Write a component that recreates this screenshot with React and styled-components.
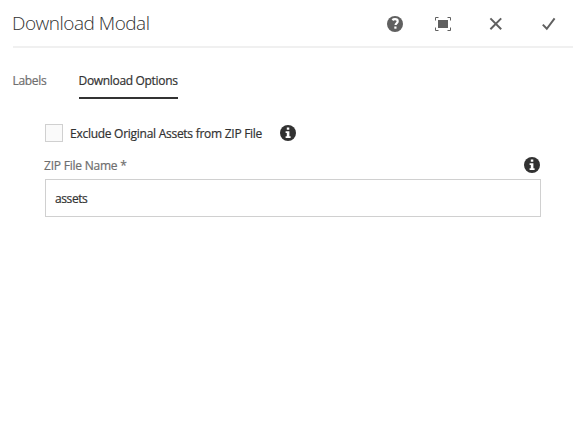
import React from 'react';
import styled, { createGlobalStyle } from 'styled-components';

const GlobalStyle = createGlobalStyle`
  * { box-sizing: border-box; }
  body {
    margin: 0;
    background: #fff;
    color: #323232;
    font-family: "Open Sans", "Noto Sans", sans-serif;
    font-size: 12px;
    -webkit-font-smoothing: antialiased;
    -webkit-text-stroke: 0.2px currentColor;
  }
`;

const Dialog = styled.main`
  display: flex;
  flex-direction: column;
  width: 587px;
  height: 439px;
  padding: 0 14px 0 13px;
  overflow: hidden;
`;

const Header = styled.header`
  display: flex;
  align-items: center;
  justify-content: space-between;
  height: 48px;
  border-bottom: 2px solid #f0f0f0;
`;

const Title = styled.h1`
  margin: 0 0 0 -1px;
  font-size: 19px;
  font-weight: 300;
  line-height: 24px;
  letter-spacing: -0.5px;
  white-space: nowrap;
  color: #323232;
  -webkit-text-stroke: 0;
`;

const Actions = styled.div`
  display: flex;
  align-items: center;
  padding: 1px 16px 0 0;
`;

const IconButton = styled.button`
  display: flex;
  padding: 0;
  border: 0;
  background: none;
  color: #606060;
  margin-left: ${({ $gap = 0 }) => $gap}px;
`;

const Icon = styled.svg`
  display: block;
  flex: none;
`;

const Tabs = styled.nav`
  display: flex;
  gap: 32px;
  height: 51px;
  padding-top: 22px;
`;

const Tab = styled.button`
  width: ${({ $width }) => $width}px;
  height: 29px;
  padding: 0 0 6px;
  border: 0;
  border-bottom: 2px solid ${({ $active }) => ($active ? '#323232' : 'transparent')};
  background: none;
  font: 400 12px/21px "Open Sans", "Noto Sans", sans-serif;
  letter-spacing: -0.32px;
  text-align: left;
  text-indent: -0.5px;
  white-space: nowrap;
  color: ${({ $active }) => ($active ? '#323232' : '#6e6e6e')};
`;

const Panel = styled.section`
  width: 496px;
  margin: 24px 0 0 32px;
`;

const CheckRow = styled.div`
  display: flex;
  align-items: center;
  height: 20px;
`;

const Checkbox = styled.input`
  appearance: none;
  width: 18px;
  height: 18px;
  margin: 0 7px 0 0;
  border: 1px solid #d0d0d0;
  background: #fafafa;
`;

const CheckLabel = styled.label`
  width: 210px;
  padding-top: 1px;
  line-height: 20px;
  letter-spacing: -0.27px;
  white-space: nowrap;
`;

const FieldHeader = styled.div`
  display: flex;
  align-items: center;
  justify-content: space-between;
  height: 16px;
  margin: 14px 1.5px 6px -1px;
`;

const FieldLabel = styled.label`
  padding-top: 2px;
  line-height: 16px;
  letter-spacing: -0.22px;
  color: #6e6e6e;
`;

const TextInput = styled.input`
  display: block;
  width: 496px;
  height: 38px;
  padding: 0 9px;
  border: 1px solid #d0d0d0;
  border-radius: 0;
  outline: 0;
  background: #fff;
  color: #323232;
  font: 400 12px "Open Sans", "Noto Sans", sans-serif;
  letter-spacing: -0.4px;
`;

const InfoIcon = () => (
  <Icon width="16" height="16" viewBox="0 0 16 16">
    <circle cx="8" cy="8" r="8" fill="#323232" />
    <path d="M6.8 2.6h2.5v2.2H6.8zM5.6 6.3h3.8v4.9h1.2v1.7H5.6v-1.7h1.2V8H5.6z" fill="#fff" />
  </Icon>
);

export default function App() {
  return (
    <>
      <GlobalStyle />
      <Dialog>
        <Header>
          <Title>Download Modal</Title>
          <Actions>
            <IconButton aria-label="Help">
              <Icon width="16" height="16" viewBox="0 0 16 16">
                <circle cx="8" cy="8" r="8" fill="currentColor" />
                <path d="M5.4 4.1C6 3.5 6.9 3.2 8 3.2c1.7 0 2.7.8 2.7 2.1 0 1.8-2.1 2-2.1 3.7" fill="none" stroke="#fff" strokeWidth="2.2" />
                <path d="M7.3 10.5h2.2v2.2H7.3z" fill="#fff" />
              </Icon>
            </IconButton>
            <IconButton aria-label="Toggle fullscreen" $gap={32}>
              <Icon width="16" height="16" viewBox="0 0 16 16">
                <path d="M3 4h10v8H3z" fill="currentColor" />
                <path d="M.5 4.5v-3h3M12.5 1.5h3v3M15.5 11.5v3h-3M3.5 14.5h-3v-3" fill="none" stroke="currentColor" />
              </Icon>
            </IconButton>
            <IconButton aria-label="Close" $gap={37}>
              <Icon width="16" height="16" viewBox="0 0 16 16">
                <path d="M2.4 2.4l10.8 10.8M13.2 2.4L2.4 13.2" fill="none" stroke="currentColor" strokeWidth="2" />
              </Icon>
            </IconButton>
            <IconButton aria-label="Done" $gap={37}>
              <Icon width="16" height="16" viewBox="0 0 16 16">
                <path d="M1.8 8.6l4 4.2L13.6 2.4" fill="none" stroke="currentColor" strokeWidth="2" />
              </Icon>
            </IconButton>
          </Actions>
        </Header>
        <Tabs>
          <Tab $width={34}>Labels</Tab>
          <Tab $active $width={99}>Download Options</Tab>
        </Tabs>
        <Panel>
          <CheckRow>
            <Checkbox type="checkbox" id="exclude" />
            <CheckLabel htmlFor="exclude">Exclude Original Assets from ZIP File</CheckLabel>
            <InfoIcon />
          </CheckRow>
          <FieldHeader>
            <FieldLabel htmlFor="zip">ZIP File Name *</FieldLabel>
            <InfoIcon />
          </FieldHeader>
          <TextInput id="zip" defaultValue="assets" />
        </Panel>
      </Dialog>
    </>
  );
}
